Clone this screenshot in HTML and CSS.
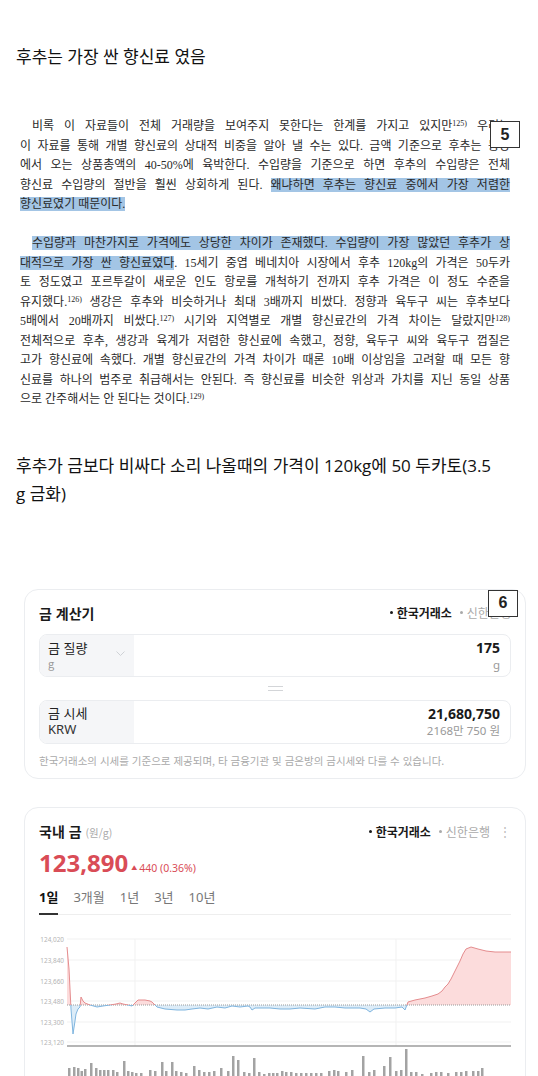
FILE: index.html
```html
<!DOCTYPE html>
<html lang="ko">
<head>
<meta charset="utf-8">
<title>후추는 가장 싼 향신료 였음</title>
<link rel="stylesheet" href="styles.css">
</head>
<body>
<main class="page">
  <h1 class="post-text h-first">후추는 가장 싼 향신료 였음</h1>

  <section class="book">
    <p class="para">
      <span class="ln indent">비록 이 자료들이 전체 거래량을 보여주지 못한다는 한계를 가지고 있지만<sup class="fn">125)</sup> 우리는</span>
      <span class="ln">이 자료를 통해 개별 향신료의 상대적 비중을 알아 낼 수는 있다. 금액 기준으로 후추는 동양</span>
      <span class="ln">에서 오는 상품총액의 40-50%에 육박한다. 수입량을 기준으로 하면 후추의 수입량은 전체</span>
      <span class="ln">향신료 수입량의 절반을 훨씬 상회하게 된다. <mark class="hl">왜냐하면 후추는 향신료 중에서 가장 저렴한</mark></span>
      <span class="ln last"><mark class="hl">향신료였기 때문이다.</mark></span>
    </p>
    <p class="para">
      <span class="ln indent"><mark class="hl">수입량과 마찬가지로 가격에도 상당한 차이가 존재했다. 수입량이 가장 많았던 후추가 상</mark></span>
      <span class="ln"><mark class="hl">대적으로 가장 싼 향신료였다</mark>. 15세기 중엽 베네치아 시장에서 후추 120kg의 가격은 50두카</span>
      <span class="ln">토 정도였고 포르투갈이 새로운 인도 항로를 개척하기 전까지 후추 가격은 이 정도 수준을</span>
      <span class="ln">유지했다.<sup class="fn">126)</sup> 생강은 후추와 비슷하거나 최대 3배까지 비쌌다. 정향과 육두구 씨는 후추보다</span>
      <span class="ln">5배에서 20배까지 비쌌다.<sup class="fn">127)</sup> 시기와 지역별로 개별 향신료간의 가격 차이는 달랐지만<sup class="fn">128)</sup></span>
      <span class="ln">전체적으로 후추, 생강과 육계가 저렴한 향신료에 속했고, 정향, 육두구 씨와 육두구 껍질은</span>
      <span class="ln">고가 향신료에 속했다. 개별 향신료간의 가격 차이가 때론 10배 이상임을 고려할 때 모든 향</span>
      <span class="ln">신료를 하나의 범주로 취급해서는 안된다. 즉 향신료를 비슷한 위상과 가치를 지닌 동일 상품</span>
      <span class="ln last">으로 간주해서는 안 된다는 것이다.<sup class="fn">129)</sup></span>
    </p>
    <div class="badge badge-5">5</div>
  </section>

  <h2 class="post-text t2">후추가 금보다 비싸다 소리 나올때의 가격이 120kg에 50 두카토(3.5<br>g 금화)</h2>

  <section class="card calc">
    <header class="card-head">
      <h3 class="card-title">금 계산기</h3>
      <div class="sources"><span class="src on">한국거래소</span><span class="src">신한은행</span></div>
    </header>
    <div class="field field-a">
      <div class="field-label">
        <span class="fl-name">금 질량</span>
        <span class="fl-unit">g</span>
        <svg class="chev" width="9" height="5" viewBox="0 0 9 5"><polyline points="0.5,0.5 4.5,4.5 8.5,0.5"/></svg>
      </div>
      <div class="field-value"><span class="fv-num">175</span><span class="fv-sub">g</span></div>
    </div>
    <div class="equals"><span></span></div>
    <div class="field field-b">
      <div class="field-label">
        <span class="fl-name">금 시세</span>
        <span class="fl-unit dark">KRW</span>
      </div>
      <div class="field-value"><span class="fv-num">21,680,750</span><span class="fv-sub">2168만 750 원</span></div>
    </div>
    <p class="note">한국거래소의 시세를 기준으로 제공되며, 타 금융기관 및 금은방의 금시세와 다를 수 있습니다.</p>
    <div class="badge badge-6">6</div>
  </section>

  <section class="card chart-card">
    <header class="card-head">
      <h3 class="card-title">국내 금 <span class="unit">(원/g)</span></h3>
      <div class="head-right">
        <div class="sources"><span class="src on">한국거래소</span><span class="src">신한은행</span></div>
        <span class="kebab">⋮</span>
      </div>
    </header>
    <div class="price-row">
      <span class="price">123,890</span>
      <span class="change"><span class="tri">▲</span>440 (0.36%)</span>
    </div>
    <nav class="tabs">
      <span class="tab on">1일</span>
      <span class="tab">3개월</span>
      <span class="tab">1년</span>
      <span class="tab">3년</span>
      <span class="tab">10년</span>
    </nav>
    <svg class="chart" width="472" height="160" viewBox="0 0 472 160">
      <defs>
        <clipPath id="up"><rect x="0" y="0" width="472" height="81"/></clipPath>
        <clipPath id="dn"><rect x="0" y="81" width="472" height="79"/></clipPath>
      </defs>
      <g class="grid">
        <line x1="28" y1="15" x2="472" y2="15"/>
        <line x1="28" y1="36" x2="472" y2="36"/>
        <line x1="28" y1="57" x2="472" y2="57"/>
        <line x1="28" y1="77" x2="472" y2="77"/>
        <line x1="28" y1="98" x2="472" y2="98"/>
        <line x1="28" y1="118" x2="472" y2="118"/>
        <line x1="96" y1="15" x2="96" y2="122"/>
        <line x1="357" y1="15" x2="357" y2="122"/>
      </g>
      <g class="ylabels">
        <text x="25" y="17.5">124,020</text>
        <text x="25" y="38.5">123,840</text>
        <text x="25" y="59.5">123,660</text>
        <text x="25" y="79.5">123,480</text>
        <text x="25" y="100.5">123,300</text>
        <text x="25" y="120.5">123,120</text>
      </g>
      <polygon class="area-up" clip-path="url(#up)" points="28,23 30,45 32,85 34,110 36,97 37,90 39,85 41,83 42,73 44,77 46,79 51,81 58,83 64,82 71,81 77,80 81,79 84,80 89,81 93,82 96,79 99,76 106,76 111,77 113,78 116,81 118,83 126,85 138,86 146,86 153,85 161,84 169,85 178,83 186,84 193,82 201,83 209,82 211,83 213,86 216,84 223,84 231,84 241,85 251,85 261,84 276,85 286,83 296,83 306,84 321,84 327,85 331,88 335,85 346,84 356,84 363,83 366,86 369,78 376,76 386,74 393,72 399,70 403,67 406,63 409,60 412,55 416,47 421,37 424,30 427,25 432,23 439,25 447,27 456,28 472,28 472,81 28,81"/>
      <polygon class="area-dn" clip-path="url(#dn)" points="28,23 30,45 32,85 34,110 36,97 37,90 39,85 41,83 42,73 44,77 46,79 51,81 58,83 64,82 71,81 77,80 81,79 84,80 89,81 93,82 96,79 99,76 106,76 111,77 113,78 116,81 118,83 126,85 138,86 146,86 153,85 161,84 169,85 178,83 186,84 193,82 201,83 209,82 211,83 213,86 216,84 223,84 231,84 241,85 251,85 261,84 276,85 286,83 296,83 306,84 321,84 327,85 331,88 335,85 346,84 356,84 363,83 366,86 369,78 376,76 386,74 393,72 399,70 403,67 406,63 409,60 412,55 416,47 421,37 424,30 427,25 432,23 439,25 447,27 456,28 472,28 472,81 28,81"/>
      <line class="base" x1="28" y1="81" x2="472" y2="81"/>
      <polyline class="line-up" clip-path="url(#up)" points="28,23 30,45 32,85 34,110 36,97 37,90 39,85 41,83 42,73 44,77 46,79 51,81 58,83 64,82 71,81 77,80 81,79 84,80 89,81 93,82 96,79 99,76 106,76 111,77 113,78 116,81 118,83 126,85 138,86 146,86 153,85 161,84 169,85 178,83 186,84 193,82 201,83 209,82 211,83 213,86 216,84 223,84 231,84 241,85 251,85 261,84 276,85 286,83 296,83 306,84 321,84 327,85 331,88 335,85 346,84 356,84 363,83 366,86 369,78 376,76 386,74 393,72 399,70 403,67 406,63 409,60 412,55 416,47 421,37 424,30 427,25 432,23 439,25 447,27 456,28 472,28"/>
      <polyline class="line-dn" clip-path="url(#dn)" points="28,23 30,45 32,85 34,110 36,97 37,90 39,85 41,83 42,73 44,77 46,79 51,81 58,83 64,82 71,81 77,80 81,79 84,80 89,81 93,82 96,79 99,76 106,76 111,77 113,78 116,81 118,83 126,85 138,86 146,86 153,85 161,84 169,85 178,83 186,84 193,82 201,83 209,82 211,83 213,86 216,84 223,84 231,84 241,85 251,85 261,84 276,85 286,83 296,83 306,84 321,84 327,85 331,88 335,85 346,84 356,84 363,83 366,86 369,78 376,76 386,74 393,72 399,70 403,67 406,63 409,60 412,55 416,47 421,37 424,30 427,25 432,23 439,25 447,27 456,28 472,28"/>
      <line class="axis" x1="28" y1="122" x2="472" y2="122"/>
      <path class="vol" d="M29 144h2.5V160h-2.5z M34 143h2.5V160h-2.5z M38 144h2.5V160h-2.5z M41.5 147h2.5V160h-2.5z M45 145h2.5V160h-2.5z M51 139h2.5V160h-2.5z M56 144h2.5V160h-2.5z M60 146h2.5V160h-2.5z M64 146h2.5V160h-2.5z M68 146h2.5V160h-2.5z M73 146h2.5V160h-2.5z M77 148h2.5V160h-2.5z M84 137h2.5V160h-2.5z M88 147h2.5V160h-2.5z M92 148h2.5V160h-2.5z M96 149h2.5V160h-2.5z M101 149h2.5V160h-2.5z M110 146h2.5V160h-2.5z M115 147h2.5V160h-2.5z M122 138h2.5V160h-2.5z M126 147h2.5V160h-2.5z M132 138h2.5V160h-2.5z M136 147h2.5V160h-2.5z M141 148h2.5V160h-2.5z M146 149h2.5V160h-2.5z M154 142h2.5V160h-2.5z M159 146h2.5V160h-2.5z M164 148h2.5V160h-2.5z M169 148h2.5V160h-2.5z M174 147h2.5V160h-2.5z M181 144h2.5V160h-2.5z M188 147h2.5V160h-2.5z M193 132h2.5V160h-2.5z M198 136h2.5V160h-2.5z M204 148h2.5V160h-2.5z M209 149h2.5V160h-2.5z M214 134h2.5V160h-2.5z M219 148h2.5V160h-2.5z M224 150h2.5V160h-2.5z M229 149h2.5V160h-2.5z M233 149h2.5V160h-2.5z M237 149h2.5V160h-2.5z M242 147h2.5V160h-2.5z M246 148h2.5V160h-2.5z M251 148h2.5V160h-2.5z M256 149h2.5V160h-2.5z M261 149h2.5V160h-2.5z M266 149h2.5V160h-2.5z M271 149h2.5V160h-2.5z M276 149h2.5V160h-2.5z M281 149h2.5V160h-2.5z M289 147h2.5V160h-2.5z M294 146h2.5V160h-2.5z M298 147h2.5V160h-2.5z M306 148h2.5V160h-2.5z M312 146h2.5V160h-2.5z M323 132h2.5V160h-2.5z M329 148h2.5V160h-2.5z M334 146h2.5V160h-2.5z M344 142h2.5V160h-2.5z M350 133h2.5V160h-2.5z M356 147h2.5V160h-2.5z M361 146h2.5V160h-2.5z M366 125h2.5V160h-2.5z M371 148h2.5V160h-2.5z M376 148h2.5V160h-2.5z M382 150h2.5V160h-2.5z M391 149h2.5V160h-2.5z M396 148h2.5V160h-2.5z M401 148h2.5V160h-2.5z M408 149h2.5V160h-2.5z M416 148h2.5V160h-2.5z M421 148h2.5V160h-2.5z M426 147h2.5V160h-2.5z M433 147h2.5V160h-2.5z M438 147h2.5V160h-2.5z M442 144h2.5V160h-2.5z"/>
    </svg>
  </section>
</main>
</body>
</html>
```

FILE: styles.css
```css
* { box-sizing: border-box; }

html, body {
  margin: 0;
  padding: 0;
}

body {
  width: 538px;
  height: 1076px;
  overflow: hidden;
  background: #ffffff;
  color: #222222;
  font-family: "Noto Sans", "Noto Sans CJK KR", sans-serif;
}

.page {
  display: flex;
  flex-direction: column;
}

/* post text */
.post-text {
  margin: 0;
  padding: 0 16px;
  font-family: "Open Sans", "Noto Sans CJK KR", sans-serif;
  font-weight: 400;
  font-size: 17px;
  color: #111111;
}

.h-first {
  margin-top: 45px;
  line-height: 24px;
}

.t2 {
  margin-top: 42px;
  line-height: 28px;
}

/* scanned book excerpt */
.book {
  position: relative;
  margin-top: 48px;
  padding: 0 28px 0 20px;
  font-family: "Liberation Serif", "Noto Sans CJK KR", serif;
  font-size: 12px;
  line-height: 19.5px;
  color: #2a2a2a;
}

.para {
  margin: 0;
}

.para + .para {
  margin-top: 19.5px;
}

.ln {
  display: block;
  text-align: justify;
  text-align-last: justify;
}

.ln.last {
  text-align-last: left;
}

.indent {
  text-indent: 12px;
}

.hl {
  background: #a3c5e5;
  color: inherit;
}

.fn {
  font-size: 8px;
  line-height: 0;
  vertical-align: baseline;
  position: relative;
  top: -4px;
}

.badge {
  position: absolute;
  width: 30px;
  height: 27px;
  border: 1px solid #333333;
  background: #ffffff;
  display: flex;
  align-items: center;
  justify-content: center;
  font: 700 16px "Liberation Sans", sans-serif;
  color: #222222;
}

.badge-5 {
  left: 490px;
  top: 4px;
}

.badge-6 {
  left: 463px;
  top: 0px;
}

/* cards */
.card {
  position: relative;
  margin: 0 12px 0 24px;
  border: 1px solid #ebedf0;
  border-radius: 14px;
  background: #ffffff;
}

.calc {
  margin-top: 81px;
  padding: 13px 14px 9px;
}

.card-head {
  display: flex;
  justify-content: space-between;
  align-items: center;
  height: 20px;
}

.card-title {
  margin: 0;
  font-family: "Noto Sans CJK KR", sans-serif;
  font-size: 14px;
  font-weight: 700;
  line-height: 20px;
  color: #1a1a1a;
}

.unit {
  font-size: 10.5px;
  font-weight: 400;
  color: #aaaaaa;
}

.sources {
  display: flex;
  gap: 8px;
  font-family: "Noto Sans CJK KR", sans-serif;
  font-size: 12px;
  line-height: 16px;
}

.src {
  display: flex;
  align-items: center;
  color: #aaaaaa;
}

.src::before {
  content: "";
  width: 3px;
  height: 3px;
  border-radius: 50%;
  background: currentColor;
  margin-right: 4px;
}

.src.on {
  color: #1a1a1a;
  font-weight: 700;
}

.field {
  display: flex;
  border: 1px solid #ebedf0;
  border-radius: 8px;
  overflow: hidden;
}

.field-a {
  margin-top: 11px;
  height: 43px;
}

.field-b {
  height: 44px;
}

.field-label {
  position: relative;
  width: 94px;
  padding-left: 8px;
  background: #f5f6f8;
  display: flex;
  flex-direction: column;
  justify-content: center;
  font-family: "Noto Sans CJK KR", sans-serif;
}

.fl-name {
  font-size: 13px;
  line-height: 16px;
  color: #222222;
}

.fl-unit {
  font-size: 11px;
  line-height: 14px;
  color: #999999;
}

.fl-unit.dark {
  font-family: "Noto Sans", sans-serif;
  font-size: 13px;
  line-height: 17px;
  color: #333333;
}

.chev {
  position: absolute;
  right: 9px;
  top: 16px;
  fill: none;
  stroke: #cfd2d6;
  stroke-width: 1;
}

.field-value {
  flex: 1;
  display: flex;
  flex-direction: column;
  align-items: flex-end;
  justify-content: center;
  padding-right: 10px;
}

.fv-num {
  font-size: 14px;
  font-weight: 700;
  line-height: 18px;
  color: #1a1a1a;
}

.fv-sub {
  font-family: "Noto Sans", "Noto Sans CJK KR", sans-serif;
  font-size: 11.5px;
  line-height: 15px;
  color: #999999;
}

.equals {
  height: 23px;
  display: flex;
  align-items: center;
  justify-content: center;
}

.equals span {
  width: 15px;
  height: 5px;
  border-top: 1.5px solid #d3d5d8;
  border-bottom: 1.5px solid #d3d5d8;
}

.note {
  margin: 9px 0 0;
  font-family: "Noto Sans CJK KR", sans-serif;
  font-size: 10.5px;
  line-height: 16px;
  color: #aaaaaa;
}

/* chart card */
.chart-card {
  margin-top: 28px;
  padding: 14px 14px 20px;
}

.head-right {
  display: flex;
  align-items: center;
  gap: 9px;
}

.kebab {
  font-size: 12px;
  line-height: 16px;
  color: #bbbbbb;
}

.price-row {
  margin-top: 6px;
  height: 30px;
  display: flex;
  align-items: baseline;
  gap: 3px;
  color: #d94c56;
}

.price {
  font-size: 24px;
  font-weight: 700;
  line-height: 30px;
}

.change {
  font-size: 10.5px;
  line-height: 14px;
}

.tri {
  font-size: 6px;
  margin-right: 2px;
  position: relative;
  top: -2px;
}

.tabs {
  margin-top: 10px;
  display: flex;
  gap: 15px;
  border-bottom: 1px solid #eeeeee;
  font-family: "Noto Sans", "Noto Sans CJK KR", sans-serif;
}

.tab {
  position: relative;
  font-size: 13px;
  line-height: 18px;
  padding-bottom: 8px;
  color: #777777;
}

.tab.on {
  color: #111111;
  font-weight: 700;
}

.tab.on::after {
  content: "";
  position: absolute;
  left: 0;
  right: 0;
  bottom: -1px;
  height: 2px;
  background: #333333;
}

.chart {
  display: block;
  margin-top: 9px;
  overflow: visible;
}

.grid line {
  stroke: #f1f1f1;
  stroke-width: 1;
}

.ylabels text {
  font-family: "Noto Sans", sans-serif;
  font-size: 6.4px;
  fill: #b4b4b4;
  text-anchor: end;
}

.area-up {
  fill: #fcdcdc;
}

.area-dn {
  fill: #dcecf8;
}

.base {
  stroke: #9a9a9a;
  stroke-width: 1;
  stroke-dasharray: 1 1;
}

.line-up {
  fill: none;
  stroke: #e48c8e;
  stroke-width: 1;
}

.line-dn {
  fill: none;
  stroke: #7fb5df;
  stroke-width: 1;
}

.axis {
  stroke: #9d9d9d;
  stroke-width: 1.5;
}

.vol {
  fill: #a3a3a3;
}
```
